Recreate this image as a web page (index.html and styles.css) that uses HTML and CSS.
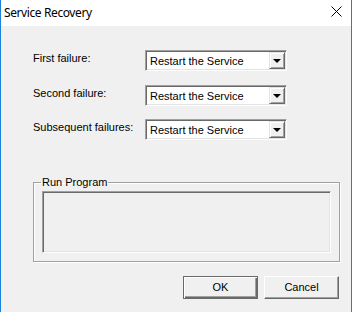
FILE: index.html
```html
<!DOCTYPE html>
<html>
<head>
<meta charset="utf-8">
<link rel="stylesheet" href="styles.css">
</head>
<body>
<div class="window">
  <div class="titlebar">
    <span class="title">Service Recovery</span>
    <svg class="close" width="11" height="11" viewBox="0 0 11 11"><path d="M0.5 0.5 L10.5 10.5 M10.5 0.5 L0.5 10.5" stroke="#000" stroke-width="1" fill="none"/></svg>
  </div>
  <div class="content">
    <div class="row r1">
      <span class="label">First failure:</span>
      <div class="select"><span class="value">Restart the Service</span><span class="drop"><span class="arrow"></span></span></div>
    </div>
    <div class="row r2">
      <span class="label">Second failure:</span>
      <div class="select"><span class="value">Restart the Service</span><span class="drop"><span class="arrow"></span></span></div>
    </div>
    <div class="row r3">
      <span class="label">Subsequent failures:</span>
      <div class="select"><span class="value">Restart the Service</span><span class="drop"><span class="arrow"></span></span></div>
    </div>
    <fieldset class="group">
      <legend>Run Program</legend>
      <div class="well"></div>
    </fieldset>
    <div class="buttons">
      <div class="btn default">OK</div>
      <div class="btn">Cancel</div>
    </div>
  </div>
</div>
</body>
</html>
```
FILE: styles.css
```css
html, body {
  margin: 0;
  padding: 0;
}
body {
  width: 352px;
  height: 312px;
  overflow: hidden;
  background: #f0f0f0;
}
.window {
  width: 352px;
  height: 312px;
  box-sizing: border-box;
  border-left: 1px solid #1a82d8;
  border-right: 1px solid #1a82d8;
  background: #f0f0f0;
  font-family: "Liberation Sans", Arial, sans-serif;
  font-size: 11px;
  color: #000;
}
.titlebar {
  height: 26px;
  background: #fff;
  display: flex;
  align-items: center;
  justify-content: space-between;
  padding: 0 9px 0 3px;
}
.title {
  font-family: "Noto Sans", sans-serif;
  font-size: 12px;
  letter-spacing: -0.4px;
  line-height: 16px;
  margin-top: -1px;
}
.close {
  display: block;
  margin-top: -3px;
}
.content {
  padding: 24px 0 0 32px;
}
.row {
  display: flex;
  align-items: flex-start;
}
.r2 { margin-top: 14px; }
.r3 { margin-top: 13px; }
.label {
  width: 112px;
  line-height: 14px;
  padding-top: 1px;
}
.select {
  width: 142px;
  height: 21px;
  box-sizing: border-box;
  background: #fff;
  border: 1px solid;
  border-color: #a0a0a0 #fff #fff #a0a0a0;
  box-shadow: inset 1px 1px #696969, inset -1px -1px #e3e3e3;
  display: flex;
  align-items: stretch;
  padding: 1px;
}
.value {
  flex: 1;
  padding-left: 3px;
  line-height: 17px;
  padding-top: 1px;
}
.drop {
  width: 16px;
  height: 17px;
  box-sizing: border-box;
  background: #f0f0f0;
  border: 1px solid;
  border-color: #e3e3e3 #696969 #696969 #e3e3e3;
  box-shadow: inset 1px 1px #fff, inset -1px -1px #a0a0a0;
  display: flex;
  align-items: center;
  justify-content: center;
}
.arrow {
  width: 0;
  height: 0;
  border-left: 4px solid transparent;
  border-right: 4px solid transparent;
  border-top: 4px solid #000;
  margin-top: 1px;
}
.group {
  margin: 36px 0 0 0;
  width: 307px;
  height: 86px;
  box-sizing: border-box;
  padding: 2px 8px 0 8px;
  border: 1px solid #a0a0a0;
  box-shadow: inset 1px 1px #fff, 1px 1px #fff;
  min-width: 0;
}
.group legend {
  padding: 0 1px;
  margin-left: -1px;
  line-height: 13px;
  color: #000;
}
.well {
  height: 62px;
  box-sizing: border-box;
  border: 1px solid;
  border-color: #a0a0a0 #fff #fff #a0a0a0;
  box-shadow: inset 1px 1px #696969, inset -1px -1px #e3e3e3;
}
.buttons {
  display: flex;
  justify-content: flex-end;
  gap: 6px;
  margin-top: 14px;
  padding-right: 12px;
}
.btn {
  width: 75px;
  height: 23px;
  box-sizing: border-box;
  display: flex;
  align-items: center;
  justify-content: center;
  background: #f0f0f0;
  border: 1px solid;
  border-color: #fff #696969 #696969 #fff;
  box-shadow: inset -1px -1px #a0a0a0;
  line-height: 13px;
}
.btn.default {
  border: 1px solid #696969;
  box-shadow: inset 1px 1px #fff, inset -1px -1px #696969, inset -2px -2px #a0a0a0;
}
```
